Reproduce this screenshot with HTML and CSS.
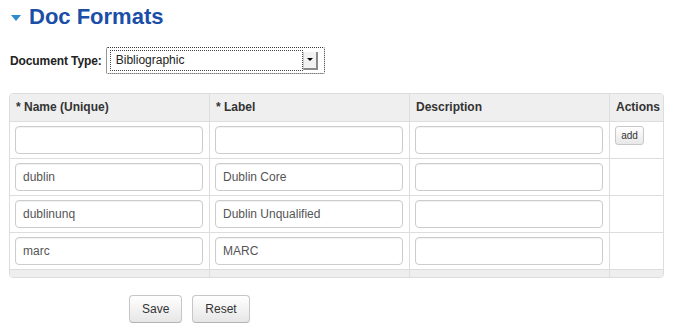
FILE: index.html
```html
<!DOCTYPE html>
<html lang="en">
<head>
  <meta charset="UTF-8" />
  <title>Doc Formats</title>
  <link rel="stylesheet" href="styles.css">
</head>
<body>

  <!-- Title -->
  <h1 class="section-title"><span class="caret"></span>Doc Formats</h1>

  <!-- Document type -->
  <div class="type-row">
    <label class="type-label">Document Type:</label>
    <div class="select-focus">
      <div class="select-text">Bibliographic</div>
      <div class="select-btn"><span class="select-arrow"></span></div>
    </div>
  </div>

  <!-- Formats grid -->
  <div class="formats">
    <div class="cell head">* Name (Unique)</div>
    <div class="cell head sep">* Label</div>
    <div class="cell head sep">Description</div>
    <div class="cell head sep">Actions</div>

    <div class="cell row"><input class="field" type="text" value=""></div>
    <div class="cell row sep"><input class="field" type="text" value=""></div>
    <div class="cell row sep"><input class="field" type="text" value=""></div>
    <div class="cell row sep"><button class="btn-add">add</button></div>

    <div class="cell row"><input class="field" type="text" value="dublin"></div>
    <div class="cell row sep"><input class="field" type="text" value="Dublin Core"></div>
    <div class="cell row sep"><input class="field" type="text" value=""></div>
    <div class="cell row sep"></div>

    <div class="cell row"><input class="field" type="text" value="dublinunq"></div>
    <div class="cell row sep"><input class="field" type="text" value="Dublin Unqualified"></div>
    <div class="cell row sep"><input class="field" type="text" value=""></div>
    <div class="cell row sep"></div>

    <div class="cell row"><input class="field" type="text" value="marc"></div>
    <div class="cell row sep"><input class="field" type="text" value="MARC"></div>
    <div class="cell row sep"><input class="field" type="text" value=""></div>
    <div class="cell row sep"></div>

    <div class="cell foot"></div>
    <div class="cell foot sep"></div>
    <div class="cell foot sep"></div>
    <div class="cell foot sep"></div>
  </div>

  <!-- Form buttons -->
  <div class="form-actions">
    <button class="btn">Save</button>
    <button class="btn">Reset</button>
  </div>

</body>
</html>
```

FILE: styles.css
```css
html, body {
  margin: 0;
  padding: 0;
  background: #fff;
  color: #333;
  font-family: 'Liberation Sans', Arial, sans-serif;
}

/* Title */
.section-title {
  margin: 0;
  padding: 4px 0 0 11px;
  height: 30px;
  line-height: 26px;
  font-size: 22px;
  font-weight: bold;
  color: #1b4ea6;
  display: flex;
  align-items: center;
  box-sizing: border-box;
}

.caret {
  width: 0;
  height: 0;
  border-left: 5px solid transparent;
  border-right: 5px solid transparent;
  border-top: 6px solid #2e8ad0;
  margin: 1px 8px 0 0;
}

/* Document type */
.type-row {
  display: flex;
  align-items: center;
  margin-top: 17px;
  padding-left: 10px;
}

.type-label {
  font-size: 12px;
  font-weight: bold;
  letter-spacing: -0.1px;
  color: #222;
  margin-right: 4px;
}

.select-focus {
  display: flex;
  align-items: center;
  width: 219px;
  height: 27px;
  box-sizing: border-box;
  border: 1px dotted #333;
  border-radius: 2px;
  padding: 0 5px 0 3px;
}

.select-text {
  width: 193px;
  height: 21px;
  box-sizing: border-box;
  border: 1px dotted #444;
  padding-left: 5px;
  font-size: 12px;
  line-height: 19px;
  color: #222;
}

.select-btn {
  width: 15px;
  height: 18px;
  box-sizing: border-box;
  background: #f2f2f2;
  border-right: 2px solid #8a8a8a;
  border-bottom: 2px solid #8a8a8a;
  border-left: 1px solid #ccc;
  display: flex;
  align-items: center;
  justify-content: center;
}

.select-arrow {
  width: 0;
  height: 0;
  border-left: 3px solid transparent;
  border-right: 3px solid transparent;
  border-top: 3px solid #000;
}

/* Formats grid */
.formats {
  display: grid;
  grid-template-columns: 199px 200px 200px 54px;
  width: 655px;
  box-sizing: border-box;
  margin: 19px 0 0 9px;
  border: 1px solid #ddd;
  border-radius: 4px;
  overflow: hidden;
}

.cell {
  box-sizing: border-box;
}

.cell.sep {
  border-left: 1px solid #ddd;
}

.head {
  height: 27px;
  line-height: 27px;
  padding-left: 6px;
  background: #efefef;
  font-size: 12px;
  font-weight: bold;
  color: #333;
}

.row {
  height: 37px;
  border-top: 1px solid #ddd;
  padding: 4px 0 0 5px;
}

.foot {
  height: 8px;
  border-top: 1px solid #ddd;
  background: #eee;
}

.field {
  display: block;
  width: 188px;
  height: 28px;
  box-sizing: border-box;
  margin: 0;
  border: 1px solid #ccc;
  border-radius: 4px;
  padding: 0 7px;
  box-shadow: inset 0 1px 1px rgba(0, 0, 0, 0.06);
  font-family: 'Liberation Sans', Arial, sans-serif;
  font-size: 12px;
  color: #555;
  outline: none;
}

.btn-add {
  display: block;
  width: 29px;
  height: 19px;
  padding: 0;
  border: 1px solid #c8c8c8;
  border-radius: 3px;
  background: linear-gradient(#fff, #e8e8e8);
  font-family: 'Liberation Sans', Arial, sans-serif;
  font-size: 10px;
  color: #333;
}

/* Form buttons */
.form-actions {
  display: flex;
  gap: 10px;
  margin-top: 17px;
  padding-left: 129px;
}

.btn {
  height: 28px;
  padding: 0 12px;
  border: 1px solid #c6c6c6;
  border-bottom-color: #b3b3b3;
  border-radius: 4px;
  background: linear-gradient(#fff, #e6e6e6);
  box-shadow: 0 1px 1px rgba(0, 0, 0, 0.05);
  font-family: 'Liberation Sans', Arial, sans-serif;
  font-size: 12px;
  color: #333;
}
```
